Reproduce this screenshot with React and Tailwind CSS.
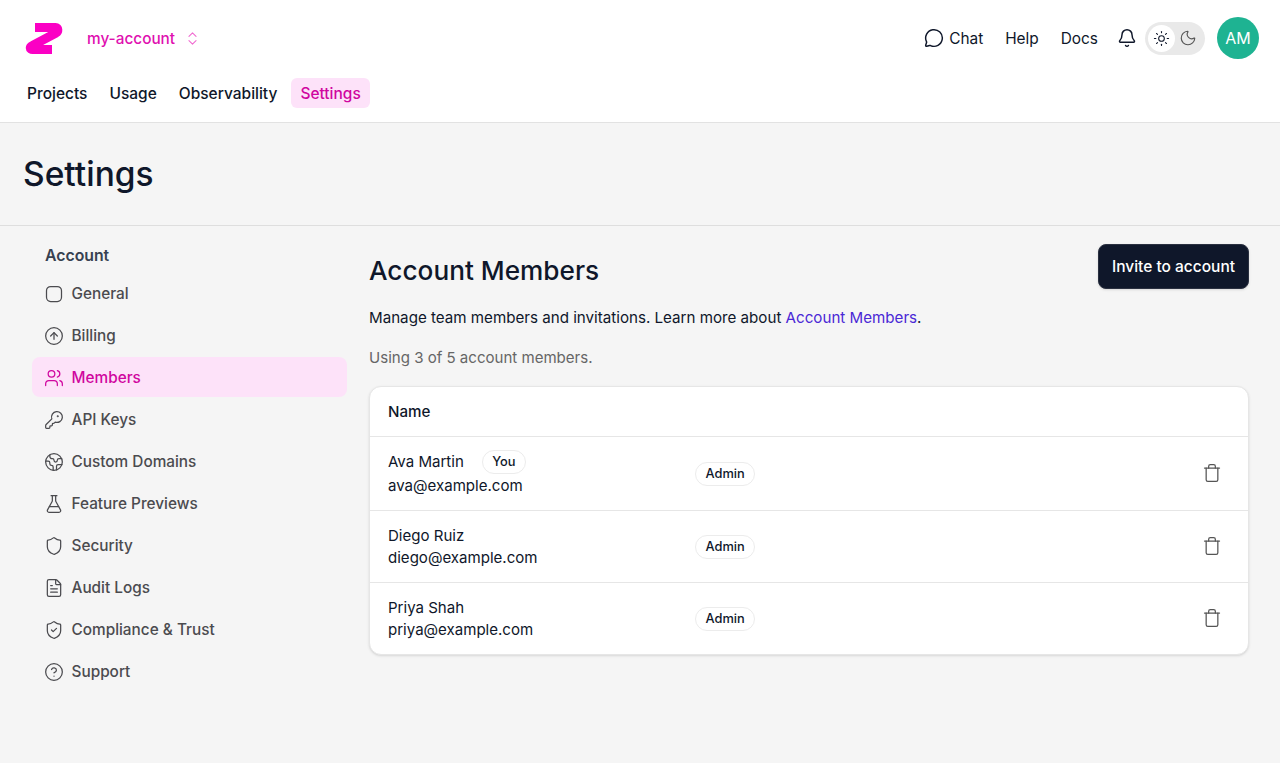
import React from "react";
import {
  ChevronsUpDown,
  MessageCircle,
  Bell,
  Sun,
  Moon,
  CircleArrowUp,
  Users,
  KeyRound,
  Earth,
  FlaskConical,
  Shield,
  FileText,
  ShieldCheck,
  CircleHelp,
  Trash,
} from "lucide-react";

const RoundSquare = (props) => (
  <svg width="20" height="20" viewBox="0 0 24 24" fill="none" stroke="currentColor" strokeWidth="1.5" {...props}>
    <rect x="3" y="3" width="18" height="18" rx="5" />
  </svg>
);

const SIDE_ITEMS = [
  { label: "General", icon: RoundSquare },
  { label: "Billing", icon: CircleArrowUp },
  { label: "Members", icon: Users, active: true },
  { label: "API Keys", icon: KeyRound },
  { label: "Custom Domains", icon: Earth },
  { label: "Feature Previews", icon: FlaskConical },
  { label: "Security", icon: Shield },
  { label: "Audit Logs", icon: FileText },
  { label: "Compliance & Trust", icon: ShieldCheck },
  { label: "Support", icon: CircleHelp },
];

const MEMBERS = [
  { name: "Ava Martin", email: "ava@example.com", you: true },
  { name: "Diego Ruiz", email: "diego@example.com" },
  { name: "Priya Shah", email: "priya@example.com" },
];

const Logo = () => (
  <svg width="38" height="33" viewBox="0 0 38 33" className="shrink-0">
    <path
      d="M10 5.5H30.5C33.5 5.5 33.5 9.5 31 11L7.5 23.5C4.5 25 4.5 27.5 7.5 27.5H27"
      fill="none"
      stroke="#fb00c4"
      strokeWidth="9"
    />
  </svg>
);

const Badge = ({ children }) => (
  <span className="inline-flex h-6 items-center rounded-full border border-[#ececec] bg-white px-[9.5px] text-[12.8px] font-medium text-[#0f172a]">
    {children}
  </span>
);

export default function App() {
  return (
    <div className="min-h-[763px] bg-[#f5f5f5] font-['Inter',sans-serif] text-[#0f172a]">
      <header className="h-[123px] border-b border-[#e2e2e2] bg-white pl-[25px] pr-[21px]">
        <div className="flex h-[76px] items-center">
          <Logo />
          <span className="ml-[24px] mt-px text-[15.35px] font-medium text-[#e010b0]">my-account</span>
          <ChevronsUpDown size={17} strokeWidth={1.5} className="ml-[9px] text-[#f06ad0]" />
          <div className="ml-auto flex items-center">
            <MessageCircle size={20} strokeWidth={1.75} />
            <span className="ml-[5px] mt-px text-[15.4px]">Chat</span>
            <span className="ml-[22px] mt-px text-[15.4px]">Help</span>
            <span className="ml-[22px] mt-px text-[15.4px]">Docs</span>
            <Bell size={20} strokeWidth={1.75} className="ml-[19px]" />
            <div className="ml-[8px] flex h-[33px] w-[60px] items-center rounded-full bg-[#e9e9e9] px-[3px]">
              <span className="flex h-[27px] w-[27px] items-center justify-center rounded-full bg-white">
                <Sun size={17} strokeWidth={1.5} />
              </span>
              <Moon size={18} strokeWidth={1.5} className="ml-[4px] text-[#555]" />
            </div>
            <span className="ml-[12px] flex h-[42px] w-[42px] items-center justify-center rounded-full bg-[#1eb392] text-[16px] text-white">
              AM
            </span>
          </div>
        </div>
        <nav className="mt-[2px] flex h-[30px] items-center gap-[6px] pl-[2px] text-[15.5px] font-medium">
          <span className="mt-px pr-2">Projects</span>
          <span className="mt-px px-2">Usage</span>
          <span className="mt-px px-2">Observability</span>
          <span className="flex h-[30px] items-center rounded-md bg-[#fde2f9] px-[9px] pt-px text-[#d0069f]">Settings</span>
        </nav>
      </header>

      <div className="flex h-[103px] items-center border-b border-[#dedede] pl-[23px]">
        <h1 className="text-[33.5px] font-medium">Settings</h1>
      </div>

      <div className="flex pl-[32px] pr-[31px] pt-[18px]">
        <aside className="w-[315px] shrink-0">
          <div className="mb-[6px] mt-px pl-[13px] text-[15.8px] font-semibold leading-[22px] text-[#374151]">Account</div>
          <ul className="flex flex-col gap-[2px]">
            {SIDE_ITEMS.map(({ label, icon: Icon, active }) => (
              <li
                key={label}
                className={`flex h-10 items-center gap-[7.5px] rounded-lg pl-[12px] pt-[2px] text-[15.35px] font-medium ${
                  active ? "bg-[#fde2f9] text-[#d0069f]" : "text-[#4b4b4f]"
                }`}
              >
                <Icon size={20} strokeWidth={1.5} />
                {label}
              </li>
            ))}
          </ul>
        </aside>

        <main className="ml-[22px] flex-1">
          <div className="flex items-start justify-between">
            <h2 className="mt-[7px] text-[26.2px] font-medium">Account Members</h2>
            <button className="h-[45px] w-[151px] rounded-lg border border-[#2a3040] bg-[#0f172a] text-[15.5px] font-medium text-white shadow-sm">
              Invite to account
            </button>
          </div>
          <p className="mt-[16px] text-[15.15px] leading-6">
            Manage team members and invitations. Learn more about{" "}
            <span className="text-[#4a28d6]">Account Members</span>.
          </p>
          <p className="mt-4 text-[15.05px] leading-6 text-[#666]">Using 3 of 5 account members.</p>

          <div className="mt-[16px] rounded-xl border border-[#e6e6e6] bg-white shadow-sm">
            <div className="flex h-[50px] items-center border-b border-[#e6e6e6] px-[18px] pt-[2px] text-[15.15px] font-medium">
              Name
            </div>
            {MEMBERS.map((m, i) => (
              <div
                key={m.email}
                className={`flex items-center px-[18px] ${i < 2 ? "border-b border-[#e6e6e6]" : ""} ${
                  i === 0 ? "h-[74px]" : i === 1 ? "h-[72px]" : "h-[71px]"
                }`}
              >
                <div className="w-[307px] text-[15.05px] leading-[22px]">
                  <div className={`flex items-center gap-[18px] ${m.you ? "mb-px" : ""}`}>
                    {m.name}
                    {m.you && <Badge>You</Badge>}
                  </div>
                  <div>{m.email}</div>
                </div>
                <Badge>Admin</Badge>
                <Trash size={20} strokeWidth={1.5} className="mb-[2px] ml-auto mr-[8px] text-[#555]" />
              </div>
            ))}
          </div>
        </main>
      </div>
    </div>
  );
}
